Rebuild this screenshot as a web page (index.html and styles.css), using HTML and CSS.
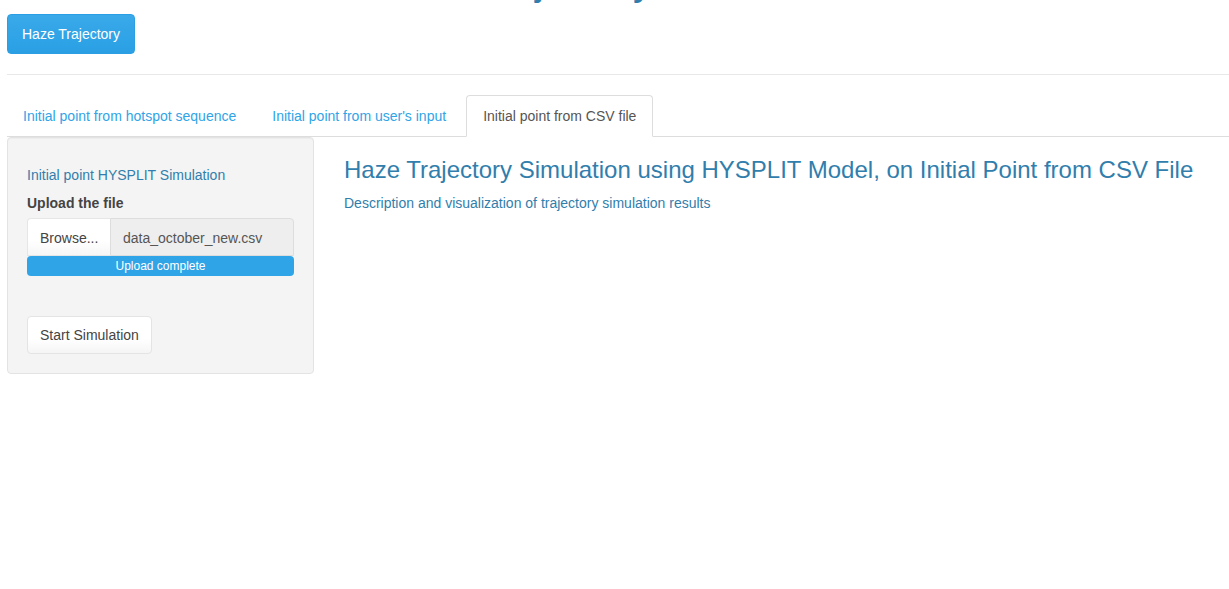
FILE: index.html
```html
<!DOCTYPE html>
<html>
<head>
<meta charset="utf-8">
<link rel="stylesheet" href="styles.css">
</head>
<body>
<div class="page">
  <h1 class="app-title">Haze Trajectory</h1>
  <button class="btn btn-primary">Haze Trajectory</button>
  <hr class="divider">
  <ul class="tabs">
    <li class="tab"><a>Initial point from hotspot sequence</a></li>
    <li class="tab"><a>Initial point from user's input</a></li>
    <li class="tab active"><a>Initial point from CSV file</a></li>
  </ul>
  <div class="content">
    <div class="well">
      <div class="well-title">Initial point HYSPLIT Simulation</div>
      <div class="label">Upload the file</div>
      <div class="file-group">
        <span class="browse">Browse...</span>
        <span class="filename">data_october_new.csv</span>
      </div>
      <div class="progress">Upload complete</div>
      <button class="btn btn-default">Start Simulation</button>
    </div>
    <div class="main">
      <h3 class="main-title">Haze Trajectory Simulation using HYSPLIT Model, on Initial Point from CSV File</h3>
      <div class="main-sub">Description and visualization of trajectory simulation results</div>
    </div>
  </div>
</div>
</body>
</html>
```
FILE: styles.css
```css
* { box-sizing: border-box; }
html, body { margin: 0; padding: 0; background: #fff; }
body {
  font-family: "Liberation Sans", Arial, Helvetica, sans-serif;
  font-size: 14px;
  line-height: 20px;
  color: #555;
  overflow: hidden;
}
.page { padding-left: 7px; }
.app-title {
  margin: -39px 0 0 366px;
  font-size: 40px;
  line-height: 40px;
  font-weight: normal;
  color: #317eac;
  white-space: nowrap;
}
.btn {
  display: inline-block;
  font-family: inherit;
  font-size: 14px;
  line-height: 18px;
  border-radius: 4px;
  cursor: pointer;
}
.btn-primary {
  margin-top: 13px;
  height: 40px;
  padding: 10px 14px;
  color: #fff;
  background: linear-gradient(#3aa9e9, #2fa4e7 60%, #2a9fe3);
  border: 1px solid #2a9fe3;
}
.divider {
  margin: 20px 0 0 0;
  border: 0;
  border-top: 1px solid #e8e8e8;
  height: 0;
}
.tabs {
  list-style: none;
  margin: 20px 0 0 0;
  padding: 0;
  display: flex;
  border-bottom: 1px solid #ddd;
  height: 42px;
}
.tab {
  margin-right: 4px;
  margin-bottom: -1px;
}
.tab a {
  display: block;
  padding: 10px 15px;
  line-height: 20px;
  border: 1px solid transparent;
  border-radius: 4px 4px 0 0;
  color: #2fa4e7;
}
.tab.active a {
  padding: 10px 16px;
  color: #555;
  background: #fff;
  border-color: #ddd;
  border-bottom-color: #fff;
}
.content {
  display: flex;
  gap: 31px;
  align-items: flex-start;
}
.well {
  width: 307px;
  flex: none;
  background: #f4f4f4;
  border: 1px solid #e3e3e3;
  border-radius: 4px;
  padding: 19px;
  box-shadow: inset 0 1px 1px rgba(0,0,0,0.03);
}
.well-title {
  margin-top: 8px;
  color: #317eac;
  line-height: 20px;
}
.label {
  margin-top: 8px;
  font-weight: bold;
  color: #444;
  margin-bottom: 5px;
}
.file-group {
  display: flex;
  height: 38px;
}
.browse {
  width: 83px;
  flex: none;
  padding: 9px 0 0 12px;
  background: linear-gradient(#fff, #fff 60%, #f6f6f6);
  border: 1px solid #e6e6e6;
  border-right: none;
  border-radius: 4px 0 0 0;
  color: #444;
  white-space: nowrap;
}
.filename {
  flex: 1;
  padding: 9px 12px 0 12px;
  background: #eee;
  border: 1px solid #ddd;
  border-radius: 0 4px 0 0;
  color: #555;
  white-space: nowrap;
}
.progress {
  height: 20px;
  background: #2fa4e7;
  border-radius: 4px;
  color: #fff;
  font-size: 12px;
  line-height: 20px;
  text-align: center;
}
.btn-default {
  margin-top: 40px;
  height: 38px;
  padding: 9px 12px;
  line-height: 18px;
  color: #444;
  background: linear-gradient(#fff, #fff 60%, #f5f5f5);
  border: 1px solid #e4e4e4;
}
.main { flex: 1; min-width: 0; }
.main-title {
  margin: 20px 0 10px -1px;
  font-size: 24px;
  line-height: 26px;
  font-weight: normal;
  color: #317eac;
  white-space: nowrap;
}
.main-sub {
  margin-left: -1px;
  color: #317eac;
  line-height: 20px;
}
```
